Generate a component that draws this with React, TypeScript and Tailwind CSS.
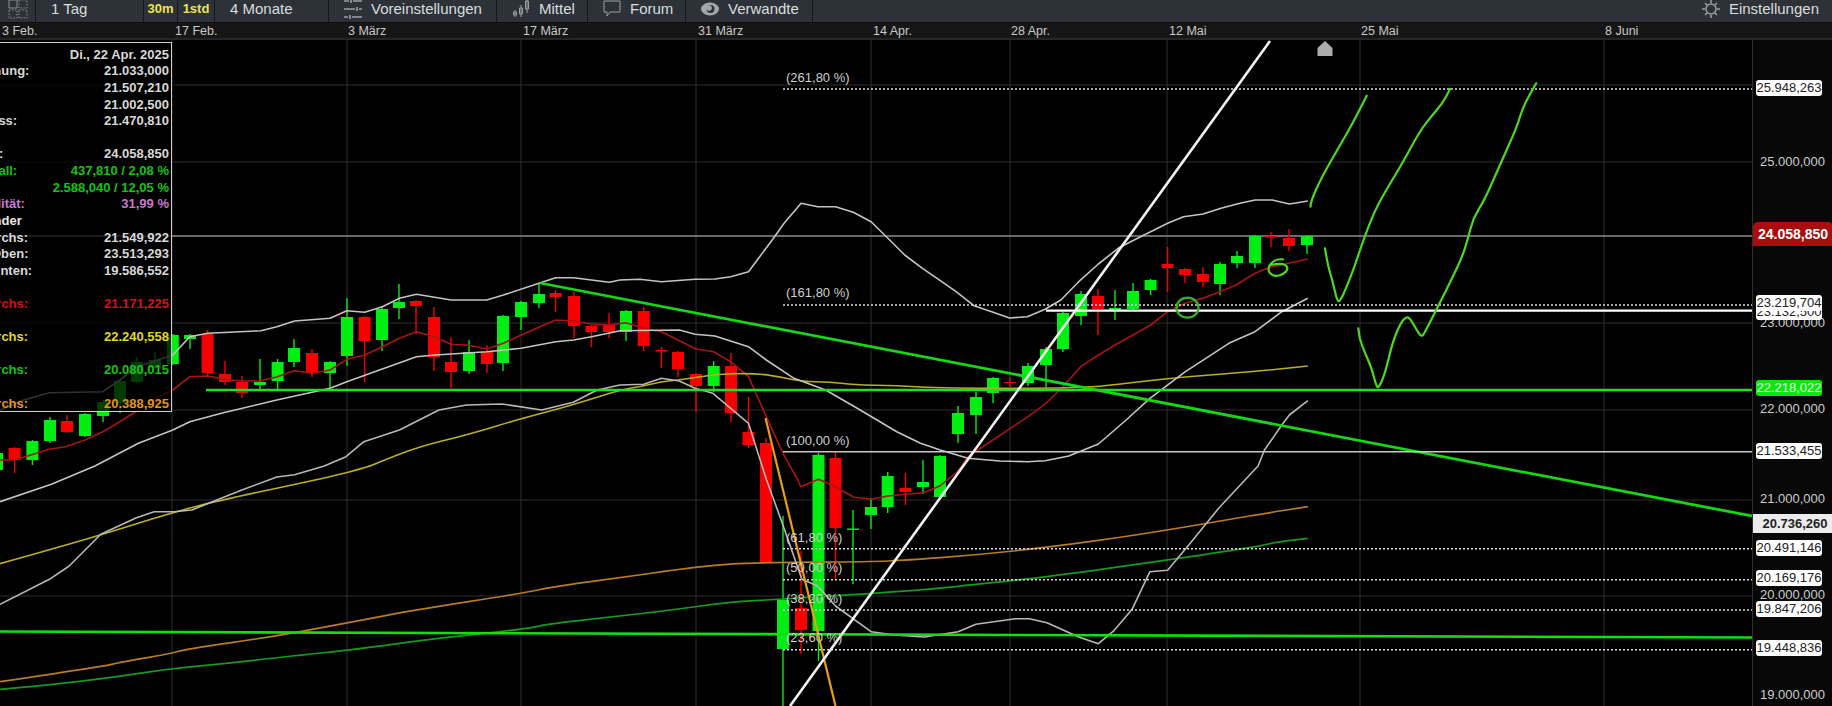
import React from "react";

type P = [number, number];
const map = (x0: number, y0: number, sx: number) => (a: number[]): P[] => {
  const o: P[] = [];
  for (let i = 0; i < a.length; i += 2) o.push([x0 + a[i] / sx, y0 + a[i + 1] / 3]);
  return o;
};
const B = map(620, 0, 2.529), C = map(1232, 0, 2.613), D = map(0, 240, 2.529), E = map(620, 240, 2.529), F = map(1232, 240, 2.613), G = map(0, 466, 2.529), H = map(620, 466, 2.529), I = map(1232, 466, 2.613);
const path = (p: P[]) => p.map(([x, y]) => `${x.toFixed(1)},${y.toFixed(1)}`).join(" ");
const smooth = (p: P[]) => {
  let d = `M${p[0][0].toFixed(1)} ${p[0][1].toFixed(1)}`;
  for (let i = 1; i < p.length - 1; i++) {
    const mx = (p[i][0] + p[i + 1][0]) / 2, my = (p[i][1] + p[i + 1][1]) / 2;
    d += `Q${p[i][0].toFixed(1)} ${p[i][1].toFixed(1)} ${mx.toFixed(1)} ${my.toFixed(1)}`;
  }
  const l = p[p.length - 1];
  return d + `L${l[0].toFixed(1)} ${l[1].toFixed(1)}`;
};

const redMA = [
  ...D([0,660,37,660,125,628,165,620,215,600,260,575,303,545,350,510,400,470,437,450,480,410,525,408,570,418,612,423,657,423,702,410,744,392,789,400,835,390,877,358,922,345,967,320,1010,295,1053,275,1098,290,1141,313,1186,316,1231,327,1273,310,1318,285,1363,262,1405,240,1451,243,1496,252,1541,255]),
  ...E([15,248,60,265,105,275,147,300,192,327,237,335,280,365,325,410,370,530,412,640,450,720]),
  ...H([457,62,502,40,545,62,590,93,635,100,677,90,722,85,767,80,809,60,855,15]),
  ...E([880,650,943,600,987,565,1032,530,1077,490,1120,440,1165,380,1210,345,1252,315,1297,285,1342,255,1385,215,1429,190,1474,175,1517,155,1558,135]),
  ...F([60,100,100,82,198,57]),
];
const upper = [
  ...D([0,510,60,480,125,458,260,455,303,420,347,380,437,345,480,290,525,280,660,272,700,260,745,243,835,235,877,212,922,217,967,200,1010,175,1053,163,1141,180,1231,180,1273,165,1363,130,1405,113,1451,113,1541,127]),
  ...E([0,120,50,118,105,125,190,118,240,117,280,110,325,95,385,0]),
  ...B([415,670,458,610,500,620,545,620,590,637,635,665,682,720]),
  ...E([720,45,765,85,810,122,850,155,895,197,940,215,985,234,1030,230,1075,208,1115,180,1160,125,1210,72,1260,25,1295,3]),
  ...B([1385,670,1425,650,1475,642,1520,625,1568,610]),
  ...C([60,600,105,600,150,612,198,603]),
];
const lower = [
  ...G([0,107,130,55,240,0]),
  ...D([350,610,437,570,480,545,560,520,700,480,835,445,877,425,1053,350,1100,345,1231,335,1318,325,1405,305,1451,300,1496,290]),
  ...E([0,272,150,270,190,283,240,288,325,320,370,360,440,415,520,450,600,505,700,575,760,610,810,630,880,655,960,663,1030,665,1075,662,1135,648,1210,612,1280,540,1340,475,1430,395,1540,310]),
  ...F([60,275,130,215,198,175]),
];
const mid = [
  ...G([0,415,125,340,175,300,255,205,345,155,390,137,440,137,485,132,610,73,700,33,745,26,820,0]),
  ...D([875,650,920,605,1010,570,1110,510,1180,495,1270,492,1370,510,1450,487,1510,450]),
  ...E([0,435,60,433,105,415,150,423,190,445,235,460,280,505,325,550,370,718]),
  ...H([410,170,460,340,500,360,545,420,635,497,700,508,770,513,855,497,900,475,1000,458,1035,458,1080,470,1160,513,1210,533,1250,493,1295,430,1340,317,1385,313,1440,235,1515,125]),
  ...I([68,0]),
  ...F([85,630,130,555,150,525,198,482]),
];
const yellow = [
  ...G([0,293,130,250,260,205,435,140,565,100,835,33,940,0]),
  ...D([960,665,1060,620,1180,585,1320,535,1400,510,1460,490]),
  ...E([0,450,50,440,105,425,150,420,240,403,330,400,380,405,460,425,530,425,590,435,700,437,820,445,1170,445,1290,428,1430,410,1568,398]),
  ...F([100,390,198,378]),
];
const orange = [
  ...G([0,647,265,600,300,590,430,563,470,550,700,510,880,470,1050,432,1320,382,1400,362,1568,335]),
  ...H([150,310,240,297,330,290,640,287,720,283,900,267,1090,243,1320,205,1568,155]),
  ...I([70,145,198,122]),
];
const dgreen = [
  ...G([0,670,80,662,265,638,430,608,570,593,700,575,925,547,1050,525,1200,505,1320,490,1400,472,1568,450]),
  ...H([110,435,280,408,400,400,640,382,810,367,900,355,1080,333,1380,283,1568,250]),
  ...I([70,240,120,228,198,217]),
];
const hand1 = C([205,620,205,605,235,530,285,430,320,360,352,287]);
const hand2 = [...F([243,25,250,75,262,120,275,185,283,182,300,140,320,80]), ...C([345,715,370,640,400,575,440,500,490,395,520,350,550,310,570,267])];
const hand3 = [...F([330,265,332,295,350,345,365,385,378,443,385,440,400,400,420,305,440,250,455,230,465,235,480,265,495,292,505,275,540,195,575,115,600,55]), ...C([617,715,630,655,660,600,700,495,745,380,760,320,795,250])];
const hand4 = F([133,58,112,56,90,88,110,112,140,100,147,80,130,70,100,75]);

// x, bodyTop, bodyBottom, high, low, isGreen
const candles: [number, number, number, number, number, number][] = [
  [-3,453,470,450,474,1],[14.6,448,460,447,473,0],[32.4,441,460,440,465,1],[50,420,441,417,443,1],[67,421,432,415,433,0],[85,414,436,413,437,1],[103,402,416,400,422,1],[120,381,403,380,413,1],[137,362,382,357,383,1],[155,360,368,352,370,1],[172.8,335,364,334,365,1],[190,335,339,334,349,1],[207.6,334,373,330,377,0],[225,374,382,361,385,0],[242,382,393,376,398,0],[260,382,385,359,389,1],[277.6,362,381,359,389,1],[294,348,362,339,367,1],[312,353,373,349,377,0],[330,362,373,361,389,1],
  [347,317,356,298,366,1],[364.6,317,341,316,382,0],[382,309,340,306,351,1],[399,302,308,284,319,1],[416,301,306,300,334,0],[434,317,357,307,371,0],[451,362,372,337,388,0],[469,352,371,340,374,1],[487,352,364,345,373,0],[503,316,363,315,371,1],[521,302,317,301,330,1],[539,294,303,283,308,1],[555.6,293,297,290,312,0],[574,296,326,292,338,0],[591.5,326,332,325,347,0],[609,325,332,313,338,0],[626,311,332,310,341,1],[643.7,311,346,307,351,0],[661.5,350,351.5,347,368,0],[678,352,369,351,377,0],[696,374,386,373,412,0],[713.7,366,386,361,392,1],[731,366,413,353,422,0],[748.5,432,445,397,448,0],[766,443,563,438,563,0],[783,600,649,516,706,1],[801,608,630,551,654,0],[818.5,455,631,453,661,1],[835.5,458,528,452,580,0],[853,528.5,530,510,584,1],[871,507,515,498,529,1],[887.7,476,507,472,513,1],[905.5,488,492,473,505,0],[923,482,487,460,494,1],[940,456,497,455,497,1],[958,413,434,406,443,1],[976,397,415,392,434,1],[993,378,393,377,403,1],[1010,382,383,377,387,0],[1028,366,383,363,386,1],[1046,349,365,347,388,1],[1063,313,349,312,352,1],[1081,294,316,291,325,1],[1098,296,309,289,335,0],[1115,308,310,290,320,1],[1133,291,309,283,310,1],[1150.6,280,290,279,295,1],[1167.6,264,268,247,292,0],[1185,269,275,268,283,0],[1203,274,282,267,287,0],[1220,264,284,262,295,1],[1237,256,263,251,268,1],[1255,236,263,235,268,1],[1271,236,237.5,232,247,0],[1289,238,246,229,251,0],[1307,236,245,235,254,1],
];

const fibs: [string, number, number][] = [
  ["(261,80 %)", 89, 82], ["(161,80 %)", 305, 297], ["(61,80 %)", 548.7, 542], ["(50,00 %)", 579.7, 572], ["(38,20 %)", 610, 603], ["(23,60 %)", 649.7, 642],
];
const gridV = [172, 347, 521, 696, 871, 1010, 1167, 1360, 1604];
const gridH = [85, 162, 323, 410, 500, 596];

const dates = [
  { t: "3 Feb.", c: "w-[175px] pl-[2px]" }, { t: "17 Feb.", c: "w-[173px]" }, { t: "3 März", c: "w-[175px]" }, { t: "17 März", c: "w-[175px]" }, { t: "31 März", c: "w-[175px]" },
  { t: "14 Apr.", c: "w-[138px]" }, { t: "28 Apr.", c: "w-[158px]" }, { t: "12 Mai", c: "w-[192px]" }, { t: "25 Mai", c: "w-[244px]" }, { t: "8 Juni", c: "w-[100px]" },
];

const rows: { l?: string; v?: string; c: string; m?: string }[] = [
  { v: "Di., 22 Apr. 2025", c: "text-[#d8d8d8]" },
  { l: "Eröffnung:", v: "21.033,000", c: "text-[#d8d8d8]" },
  { l: "Hoch:", v: "21.507,210", c: "text-[#d8d8d8]" },
  { l: "Tief:", v: "21.002,500", c: "text-[#d8d8d8]" },
  { l: "Schluss:", v: "21.470,810", c: "text-[#d8d8d8]" },
  { c: "" },
  { l: "Stand:", v: "24.058,850", c: "text-[#d8d8d8]" },
  { l: "Intervall:", v: "437,810 / 2,08 %", c: "text-[#12c512]" },
  { v: "2.588,040 / 12,05 %", c: "text-[#12c512]" },
  { l: "Volatilität:", v: "31,99 %", c: "text-[#c877cf]" },
  { l: "Bänder", c: "text-[#e8e8e8]", m: "ml-[14px]" },
  { l: "Durchs:", v: "21.549,922", c: "text-[#d8d8d8]", m: "ml-[16px]" },
  { l: "Oben:", v: "23.513,293", c: "text-[#d8d8d8]", m: "ml-[28px]" },
  { l: "Unten:", v: "19.586,552", c: "text-[#d8d8d8]", m: "ml-[28px]" },
  { c: "" },
  { l: "Durchs:", v: "21.171,225", c: "text-[#d81010]", m: "ml-[16px]" },
  { c: "" },
  { l: "Durchs:", v: "22.240,558", c: "text-[#e6d81a]", m: "ml-[16px]" },
  { c: "" },
  { l: "Durchs:", v: "20.080,015", c: "text-[#12c512]", m: "ml-[16px]" },
  { c: "" },
  { l: "Durchs:", v: "20.388,925", c: "text-[#e0951a]", m: "ml-[16px]" },
];

const tags = [
  { t: "25.948,263", c: "top-[40px]" }, { t: "23.132,500", c: "top-[264px]" }, { t: "23.219,704", c: "top-[255px]" }, { t: "21.533,455", c: "top-[403px]" },
  { t: "20.491,146", c: "top-[500px]" }, { t: "20.169,176", c: "top-[530px]" }, { t: "19.847,206", c: "top-[561px]" }, { t: "19.448,836", c: "top-[600px]" },
];
const scale = [
  { t: "25.000,000", c: "top-[114px]" }, { t: "23.000,000", c: "top-[275px]" }, { t: "22.000,000", c: "top-[361px]" }, { t: "21.000,000", c: "top-[451px]" }, { t: "20.000,000", c: "top-[547px]" }, { t: "19.000,000", c: "top-[647px]" },
];

function Cell({ c, children }: { c: string; children: React.ReactNode }) {
  return <div className={`flex h-full items-center border-r border-[#14181b] pb-[4px] ${c}`}>{children}</div>;
}

const Ic = { fill: "none", stroke: "#9aa0a4" };

export default function App() {
  return (
    <div className="flex h-[706px] w-[1832px] flex-col overflow-hidden bg-black font-['Liberation_Sans',Arial,sans-serif]">
      <div className="flex h-[23px] shrink-0 items-stretch border-b border-[#0c0e10] bg-[#2c3238] text-[15px] text-[#d9dddf]">
        <Cell c="w-[36px] justify-center">
          <svg width="20" height="20" viewBox="0 0 20 20" fill="none" stroke="#8b9194" className="-mt-[1px]">
            <path d="M1 1h8v8H1z" />
            <path d="M11 1h8v8h-8zM1 11h8v8H1zM11 11h8v8h-8z" strokeDasharray="1.5 1.5" />
          </svg>
        </Cell>
        <Cell c="w-[108px] pl-[15px]">1 Tag</Cell>
        <Cell c="w-[34px] justify-center text-[13px] font-bold text-[#ede44a]">30m</Cell>
        <Cell c="w-[37px] justify-center text-[13px] font-bold text-[#ede44a]">1std</Cell>
        <Cell c="w-[114px] pl-[15px]">4 Monate</Cell>
        <Cell c="w-[168px] gap-[9px] pl-[15px]">
          <svg {...Ic} width="18" height="20" viewBox="0 0 18 20" strokeWidth="1.6">
            <path d="M0 2h5M9 2h9M7 0v4M0 10h11M15 10h3M13 8v4M0 18h4M8 18h10M6 16v4" />
          </svg>
          Voreinstellungen
        </Cell>
        <Cell c="w-[91px] gap-[9px] pl-[15px]">
          <svg {...Ic} width="18" height="20" viewBox="0 0 18 20">
            <path d="M3 11v7M1.500 13h3v3h-3zM9 6v12M7.500 9h3v6h-3zM15 0v14M13.500 2h3v8h-3z" />
          </svg>
          Mittel
        </Cell>
        <Cell c="w-[98px] gap-[9px] pl-[15px]">
          <svg {...Ic} width="18" height="18" viewBox="0 0 18 18">
            <path d="M1 1h16v11H7l-3 4v-4H1z" />
          </svg>
          Forum
        </Cell>
        <Cell c="w-[127px] gap-[9px] pl-[15px]">
          <svg width="18" height="14" viewBox="0 0 18 14">
            <ellipse cx="9" cy="7" rx="9" ry="6.5" fill="#a3a8ab" />
            <circle cx="9.500" cy="7" r="4" fill="#2c3238" />
            <circle cx="8" cy="6" r="2.800" fill="#a3a8ab" />
          </svg>
          Verwandte
        </Cell>
        <div className="flex flex-1 items-center justify-end gap-[9px] pb-[4px] pr-[13px]">
          <svg {...Ic} width="18" height="18" viewBox="0 0 18 18" strokeWidth="1.5">
            <circle cx="9" cy="9" r="5" />
            <path d="M9 0v3M9 15v3M0 9h3M15 9h3M3 3l2 2M13 13l2 2M15 3l-2 2M5 13l-2 2" />
          </svg>
          Einstellungen
        </div>
      </div>

      <div className="flex h-[17px] shrink-0 items-center overflow-hidden border-b-2 border-[#262626] bg-[#161616] pt-[1px] text-[12.5px] text-[#c9c9c9]">
        {dates.map((d) => (
          <span key={d.t} className={`shrink-0 ${d.c}`}>{d.t}</span>
        ))}
      </div>

      <div className="flex min-h-0 flex-1">
        <div className="relative h-full w-[1752px] shrink-0 overflow-hidden">
          <svg width="1752" height="666" viewBox="0 40 1752 666" className="absolute inset-0" fontFamily="'Liberation Sans',Arial,sans-serif">
            {gridV.map((x) => <line key={x} x1={x} x2={x} y1={40} y2={706} stroke="#2e2e2e" />)}
            {gridH.map((y) => <line key={y} x1={0} x2={1752} y1={y} y2={y} stroke="#2e2e2e" />)}
            <line x1={0} x2={1752} y1={236} y2={236} stroke="#8c8c8c" strokeWidth="1.5" />

            {candles.map(([x, t, b, h, l, g], i) => (
              <g key={i} fill={g ? "#00ee11" : "#f60000"} stroke="none">
                <rect x={x - 0.7} y={h} width={1.4} height={l - h} />
                <rect x={x - 6} y={t} width={12} height={b - t} />
              </g>
            ))}

            <g fill="none" strokeLinejoin="round">
              <polyline points={path(redMA)} stroke="#a81414" strokeWidth="1.6" />
              <path d={smooth(orange)} stroke="#b97c24" strokeWidth="1.7" />
              <path d={smooth(dgreen)} stroke="#159a20" strokeWidth="1.7" />
              <path d={smooth(yellow)} stroke="#bcae22" strokeWidth="1.6" />
              <polyline points={path(upper)} stroke="#c4c4c4" strokeWidth="1.6" />
              <polyline points={path(lower)} stroke="#c4c4c4" strokeWidth="1.6" />
              <polyline points={path(mid)} stroke="#b8b8b8" strokeWidth="1.6" />
            </g>

            <line x1={206} x2={1752} y1={390} y2={390} stroke="#1fe01f" strokeWidth="2.6" />
            <line x1={0} x2={1752} y1={631.5} y2={637.5} stroke="#10e010" strokeWidth="2.6" />
            <line x1={540} x2={1752} y1={283} y2={516} stroke="#14d814" strokeWidth="2.8" />
            <line x1={1046} x2={1752} y1={310.7} y2={310.7} stroke="#ffffff" strokeWidth="2.2" />
            <line x1={783} x2={1752} y1={451.7} y2={451.7} stroke="#c8c8c8" strokeWidth="1.4" />
            {fibs.map(([, y]) => <line key={y} x1={783} x2={1752} y1={y} y2={y} stroke="#dcdcdc" strokeWidth="1.6" strokeDasharray="2 2" />)}
            <line x1={765.5} x2={835.5} y1={418} y2={706} stroke="#e8a010" strokeWidth="2.2" />
            <line x1={790} x2={1270} y1={706} y2={41} stroke="#f2f2f2" strokeWidth="2.6" />

            <g fill="none" stroke="#4cd81e" strokeWidth="2.2" strokeLinejoin="round" strokeLinecap="round">
              <path d={smooth(hand1)} />
              <path d={smooth(hand2)} />
              <path d={smooth(hand3)} />
              <path d={smooth(hand4)} />
              <ellipse cx={1187.5} cy={307.7} rx={11} ry={10} stroke="#36b422" />
            </g>
            <path d="M1325 41l7.500 7v8h-15v-8z" fill="#acacac" />

            <g fill="#cfcfcf" fontSize="13">
              {fibs.map(([t, , y]) => <text key={t} x={786} y={y}>{t}</text>)}
              <text x={786} y={445}>(100,00 %)</text>
            </g>
          </svg>

          <div className="absolute left-[-38px] top-[2px] h-[370px] w-[210px] border-[1.5px] border-[#d0d0d0] bg-black/75 pr-[2px] pt-[3px] text-[13px] font-bold">
            {rows.map((r, i) => (
              <div key={i} className={`flex h-[16.62px] items-center justify-between leading-none ${r.c}`}>
                <span className={`whitespace-nowrap ${r.m ?? ""}`}>{r.l}</span>
                <span className="whitespace-nowrap">{r.v}</span>
              </div>
            ))}
          </div>
        </div>

        <div className="relative h-full w-[80px] shrink-0 border-l border-[#303030] bg-[#080808] text-[13px]">
          {scale.map((s) => (
            <span key={s.t} className={`absolute left-[7px] h-[16px] leading-[16px] text-[#cdcdcd] ${s.c}`}>{s.t}</span>
          ))}
          {tags.map((s) => (
            <span key={s.t} className={`absolute left-[3px] h-[16px] w-[66px] rounded-[3px] bg-white text-center leading-[16px] text-[#222] ${s.c}`}>{s.t}</span>
          ))}
          <span className="absolute left-[3px] top-[340px] h-[16px] w-[66px] rounded-[3px] bg-[#0be80b] text-center leading-[16px] text-[#e8ffe8]">22.218,022</span>
          <span className="absolute left-0 top-[182px] flex h-[24px] w-[80px] items-center justify-center rounded-t-[5px] bg-[#a80e0e] text-[14px] font-bold text-white">24.058,850</span>
          <span className="absolute left-0 top-[474px] flex h-[19px] w-[80px] items-center justify-center bg-[#ececec] pl-[4px] font-bold text-[#222]">20.736,260</span>
        </div>
      </div>
    </div>
  );
}
